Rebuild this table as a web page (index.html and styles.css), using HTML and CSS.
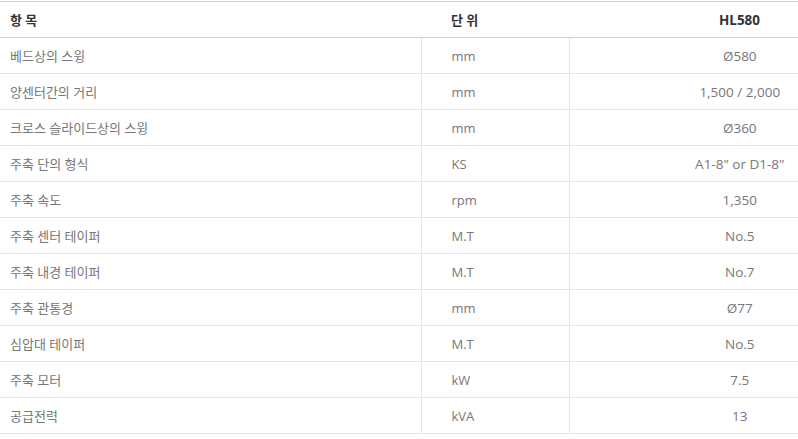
FILE: index.html
```html
<!DOCTYPE html>
<html lang="ko">
<head>
<meta charset="utf-8">
<title>HL580 사양</title>
<link rel="stylesheet" href="styles.css">
</head>
<body>
<table class="spec">
  <colgroup>
    <col class="c-item">
    <col class="c-unit">
    <col class="c-val">
  </colgroup>
  <thead>
    <tr>
      <th class="item">항 목</th>
      <th class="unit">단 위</th>
      <th class="val">HL580</th>
    </tr>
  </thead>
  <tbody>
    <tr><td class="item">베드상의 스윙</td><td class="unit">mm</td><td class="val">Ø580</td></tr>
    <tr><td class="item">양센터간의 거리</td><td class="unit">mm</td><td class="val">1,500 / 2,000</td></tr>
    <tr><td class="item">크로스 슬라이드상의 스윙</td><td class="unit">mm</td><td class="val">Ø360</td></tr>
    <tr><td class="item">주축 단의 형식</td><td class="unit">KS</td><td class="val">A1-8" or D1-8"</td></tr>
    <tr><td class="item">주축 속도</td><td class="unit">rpm</td><td class="val">1,350</td></tr>
    <tr><td class="item">주축 센터 테이퍼</td><td class="unit">M.T</td><td class="val">No.5</td></tr>
    <tr><td class="item">주축 내경 테이퍼</td><td class="unit">M.T</td><td class="val">No.7</td></tr>
    <tr><td class="item">주축 관통경</td><td class="unit">mm</td><td class="val">Ø77</td></tr>
    <tr><td class="item">심압대 테이퍼</td><td class="unit">M.T</td><td class="val">No.5</td></tr>
    <tr><td class="item">주축 모터</td><td class="unit">kW</td><td class="val">7.5</td></tr>
    <tr><td class="item">공급전력</td><td class="unit">kVA</td><td class="val">13</td></tr>
  </tbody>
</table>
</body>
</html>
```

FILE: styles.css
```css
html, body {
  margin: 0;
  padding: 0;
  background: #fff;
}
body {
  padding-top: 1px;
  font-family: "Open Sans", "Noto Sans CJK KR", sans-serif;
  font-size: 13px;
}
.spec {
  width: 798px;
  border-collapse: collapse;
  table-layout: fixed;
}
.c-item { width: 421px; }
.c-unit { width: 148px; }
.c-val { width: 229px; }
.spec th,
.spec td {
  height: 36px;
  padding: 0;
  box-sizing: border-box;
  vertical-align: middle;
  text-align: left;
  white-space: nowrap;
}
.spec th {
  color: #333;
  font-weight: bold;
  border-top: 1px solid #cfcfcf;
  border-bottom: 1px solid #cfcfcf;
}
.spec td {
  color: #777;
  font-weight: normal;
  border-bottom: 1px solid #e6e6e6;
}
.spec .item { padding-left: 10px; }
.spec .unit { padding-left: 30px; }
.spec .val { padding-left: 112px; text-align: center; font-size: 13.5px; }
.spec td.unit,
.spec td.val { border-left: 1px solid #e6e6e6; }
```
